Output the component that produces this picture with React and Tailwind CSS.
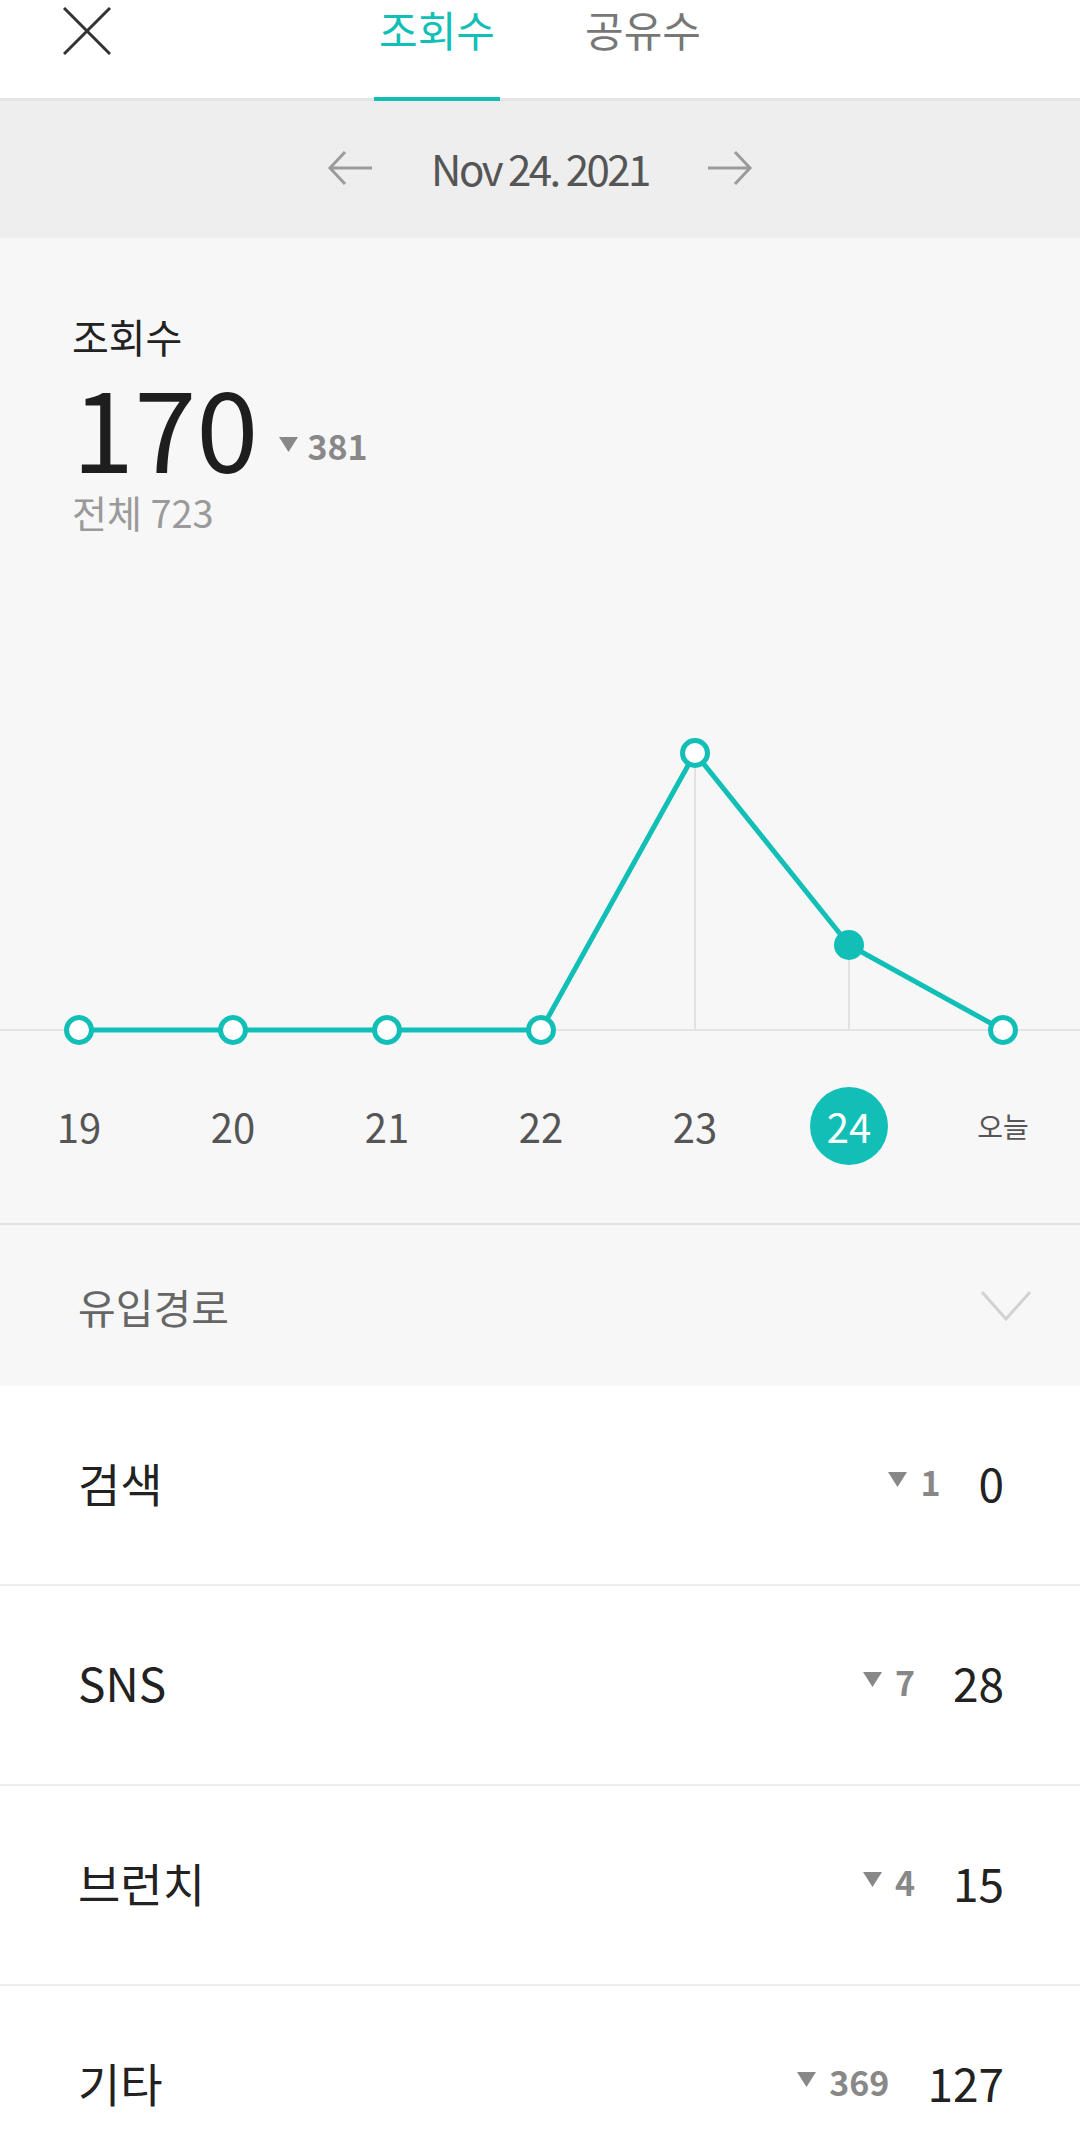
import React from 'react';

const TEAL = '#12bfb7';

const days = [
  { label: '19', y: 499 },
  { label: '20', y: 499 },
  { label: '21', y: 499 },
  { label: '22', y: 499 },
  { label: '23', y: 222 },
  { label: '24', y: 414, active: true },
  { label: '오늘', y: 499 },
];

const sources = [
  { name: '검색', diff: 1, value: 0 },
  { name: 'SNS', diff: 7, value: 28 },
  { name: '브런치', diff: 4, value: 15 },
  { name: '기타', diff: 369, value: 127 },
];

const xAt = (i) => 79 + 154 * i;

const DownTriangle = ({ className }) => (
  <svg width="19" height="15" viewBox="0 0 19 15" className={className}>
    <path d="M0 0 L19 0 L9.5 15 Z" fill="#888888" />
  </svg>
);

const Header = () => (
  <div className="grid h-[101px] grid-cols-[1fr_auto_1fr] border-b-[3px] border-[#e4e4e4] bg-white">
    <div className="pl-[63px] pt-[7px]">
      <svg width="48" height="48" viewBox="0 0 48 48">
        <path d="M1 1 L47 47 M47 1 L1 47" stroke="#333333" strokeWidth="3" />
      </svg>
    </div>
    <div className="flex gap-[80px]">
      <div className="-mb-[3px] h-[101px] w-[126px] border-b-4 border-[#12bfb7] pt-[2px] text-center text-[42px] leading-[54px] text-[#12bfb7]">
        조회수
      </div>
      <div className="-mb-[3px] h-[101px] w-[126px] pt-[2px] text-center text-[42px] leading-[54px] text-[#777777]">
        공유수
      </div>
    </div>
    <div />
  </div>
);

const DateBar = () => (
  <div className="flex h-[137px] items-center justify-center bg-[#eeeeee] pb-[4px]">
    <svg width="46" height="36" viewBox="0 0 46 36">
      <path d="M45 18 L3 18 M18 2 L3 18 L18 34" stroke="#9b9b9b" strokeWidth="3" fill="none" />
    </svg>
    <div className="mx-[58px] text-[42px] leading-[50px] tracking-[-2.5px] text-[#555555]">Nov 24. 2021</div>
    <svg width="46" height="36" viewBox="0 0 46 36">
      <path d="M1 18 L43 18 M28 2 L43 18 L28 34" stroke="#9b9b9b" strokeWidth="3" fill="none" />
    </svg>
  </div>
);

const Chart = () => {
  const pts = days.map((d, i) => `${xAt(i)},${d.y}`).join(' ');
  return (
    <svg width="1080" height="556" viewBox="0 0 1080 556" className="block">
      <line x1="0" y1="499" x2="1080" y2="499" stroke="#e4e4e4" strokeWidth="2" />
      <line x1={xAt(4)} y1="222" x2={xAt(4)} y2="499" stroke="#e2e2e2" strokeWidth="2" />
      <line x1={xAt(5)} y1="414" x2={xAt(5)} y2="499" stroke="#e2e2e2" strokeWidth="2" />
      <polyline points={pts} fill="none" stroke={TEAL} strokeWidth="5" strokeLinejoin="round" />
      {days.map((d, i) =>
        d.active ? (
          <circle key={i} cx={xAt(i)} cy={d.y} r="15" fill={TEAL} />
        ) : (
          <circle key={i} cx={xAt(i)} cy={d.y} r="12.5" fill="#ffffff" stroke={TEAL} strokeWidth="5" />
        )
      )}
    </svg>
  );
};

const Stats = () => (
  <div className="border-b-2 border-[#e2e2e2] bg-[#f7f7f7] pb-[58px]">
    <div className="px-[72px] pt-[74px]">
      <div className="text-[40px] leading-[48px] text-[#222222]">조회수</div>
      <div className="mt-[8px] flex items-end">
        <div className="text-[112px] leading-none text-[#1e1e1e]">170</div>
        <div className="mb-[17px] ml-[21px] flex items-center gap-[9px]">
          <DownTriangle className="-mt-[4px]" />
          <span className="text-[34px] font-bold leading-none text-[#888888]">381</span>
        </div>
      </div>
      <div className="mt-[13px] text-[38px] leading-none text-[#9a9a9a]">전체 723</div>
    </div>
    <Chart />
    <div className="flex h-[78px] items-center">
      {days.map((d, i) => (
        <div key={i} className="flex w-[154px] justify-center first:ml-[2px]">
          {d.active ? (
            <div className="flex h-[78px] w-[78px] items-center justify-center rounded-full bg-[#12bfb7] text-[40px] leading-none text-white">
              {d.label}
            </div>
          ) : d.label === '오늘' ? (
            <span className="text-[28px] leading-none text-[#555555]">{d.label}</span>
          ) : (
            <span className="text-[40px] leading-none text-[#555555]">{d.label}</span>
          )}
        </div>
      ))}
    </div>
  </div>
);

const Sources = () => (
  <div>
    <div className="flex h-[161px] items-center justify-between bg-[#f7f7f7] pl-[78px] pr-[49px]">
      <span className="text-[41px] leading-[48px] text-[#666666]">유입경로</span>
      <svg width="50" height="30" viewBox="0 0 50 30">
        <path d="M1 1 L25 28 L49 1" stroke="#d2d2d2" strokeWidth="3" fill="none" />
      </svg>
    </div>
    <div className="bg-white">
      {sources.map((s) => (
        <div
          key={s.name}
          className="flex h-[200px] items-center justify-between border-b-2 border-[#ededed] pb-[6px] pl-[78px] pr-[76px]"
        >
          <span className="text-[46px] leading-none text-[#222222]">{s.name}</span>
          <div className="flex items-center">
            <DownTriangle className="-mt-[6px]" />
            <span className="ml-[13px] text-[34px] font-semibold leading-none text-[#888888]">{s.diff}</span>
            <span className="ml-[38px] text-[46px] leading-none text-[#222222]">{s.value}</span>
          </div>
        </div>
      ))}
    </div>
  </div>
);

export default function App() {
  return (
    <div className="min-h-[2141px] w-[1080px] overflow-hidden bg-white font-['Noto_Sans_CJK_KR','Noto_Sans',sans-serif]">
      <Header />
      <DateBar />
      <Stats />
      <Sources />
    </div>
  );
}
